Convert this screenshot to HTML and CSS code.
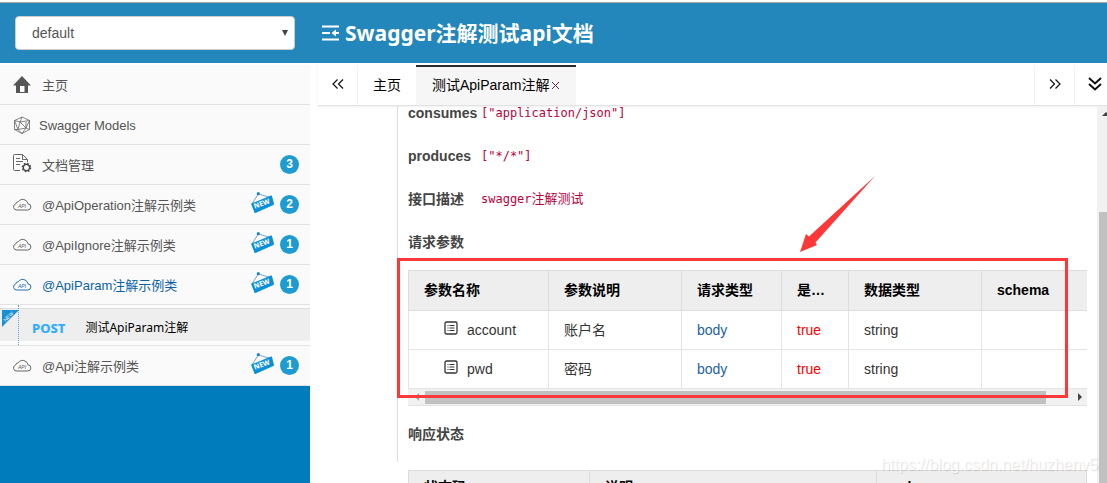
FILE: index.html
```html
<!DOCTYPE html>
<html lang="zh-CN">
<head>
<meta charset="utf-8">
<title>Swagger注解测试api文档</title>
<link rel="stylesheet" href="styles.css">
</head>
<body>
<svg class="sprites" aria-hidden="true">
  <symbol id="cloud" viewBox="0 0 20 20">
    <path d="M5 15H15.500a3 3 0 0 0 .5-6.200 4.900 4.900 0 0 0-3-3.800A4.700 4.700 0 0 0 6.500 6.700 3 3 0 0 0 3.600 9 3.100 3.100 0 0 0 5 15Z" fill="none" stroke="currentColor" stroke-width=".9"/>
    <text x="6" y="12.500" class="cloud-text">API</text>
  </symbol>
  <symbol id="sign" viewBox="0 0 25 25">
    <path d="M2.500 12 8.300 3 19 6" fill="none" stroke="#6f9fbf" stroke-width=".9"/>
    <circle cx="8.300" cy="2.700" r="1.600" fill="#1a86c9"/>
    <path d="M1.800 12.300 21 4.500q.8-.3 1 .5l2 7.800q.2.800-.6 1.200L5.500 22q-.8.300-1-.5L1.200 13.300Q1 12.600 1.800 12.300Z" fill="#0a8fdc"/>
    <text x="4.800" y="17.800" transform="rotate(-20 4.800 17.800)" class="sign-text">NEW</text>
  </symbol>
  <symbol id="list" viewBox="0 0 14 14">
    <rect x="1" y="1" width="12" height="12" rx="1.500" fill="none" stroke="currentColor" stroke-width="1.300"/>
    <path d="M3.500 4.500h1m1 0h5M3.500 7h1m1 0h5M3.500 9.500h1m1 0h5" stroke="currentColor"/>
  </symbol>
</svg>

<header class="topbar">
  <div class="picker">
    <select class="group-select" aria-label="分组"><option>default</option></select>
    <span class="caret" aria-hidden="true"></span>
  </div>
  <h1 class="title">
    <svg class="fold" viewBox="0 0 18 16" aria-hidden="true"><path d="M0 1.500h17M0 8h8M0 14.500h17" stroke="#fff" stroke-width="2"/><path d="M14 4.500v7L9.500 8Z" fill="#fff"/><path d="M12 8h5" stroke="#fff" stroke-width="2"/></svg>
    Swagger注解测试api文档
  </h1>
</header>

<div class="body">
  <nav class="sidebar">
    <a class="item" href="#"><svg class="icon" viewBox="0 0 20 20"><path d="M10 1 1 10.500h3V18h12v-7.500h3Z" fill="#555"/><path d="M8 11h4.500v6H8z" fill="#fafafa"/></svg><span class="name">主页</span></a>
    <a class="item" href="#"><svg class="icon" viewBox="0 0 20 20"><path d="M10 2 17.500 5.500v9L10 18.500l-7.500-4v-9ZM2.500 5.500 8 7l9.500-1.500M8 7l-2 7.500-3.500-9M6 14.500 10 18.500l4-5.500 3.500 1.500M6 14.500 14 13V7M8 7l6 6M10 2 8 7M14 13l3.500-7.500M2.500 14.500H6" fill="none" stroke="#666" stroke-width=".8"/></svg><span class="name model">Swagger Models</span></a>
    <a class="item" href="#"><svg class="icon doc" viewBox="0 0 20 20"><path d="M8 17.500H2.500Q1.500 17.500 1.500 16.500V2.500Q1.500 1.500 2.500 1.500H10.500L15.500 6.500V9M10.500 1.500v5h5M4 5.500h4M4 8.500h7M4 11.500h4" fill="none" stroke="#666"/><circle cx="14.500" cy="14.500" r="4" fill="none" stroke="#444" stroke-width="1.600" stroke-dasharray="1.700 1.440"/><circle cx="14.500" cy="14.500" r="3.100" fill="#fafafa" stroke="#444" stroke-width="1.200"/></svg><span class="name">文档管理</span><span class="badge">3</span></a>
    <a class="item" href="#"><svg class="icon"><use href="#cloud"/></svg><span class="name">@ApiOperation注解示例类</span><svg class="sign"><use href="#sign"/></svg><span class="badge">2</span></a>
    <a class="item" href="#"><svg class="icon"><use href="#cloud"/></svg><span class="name">@ApiIgnore注解示例类</span><svg class="sign"><use href="#sign"/></svg><span class="badge">1</span></a>
    <a class="item active" href="#"><svg class="icon"><use href="#cloud"/></svg><span class="name">@ApiParam注解示例类</span><svg class="sign"><use href="#sign"/></svg><span class="badge">1</span></a>
    <div class="submenu">
      <a class="method" href="#"><span class="verb">POST</span><span>测试ApiParam注解</span></a>
      <svg class="corner" viewBox="0 0 17 17" aria-hidden="true"><path d="M0 0H17L0 17Z" fill="#1a8fd6"/><text x="3.500" y="12" transform="rotate(-45 3.500 12)" class="corner-text">NEW</text></svg>
    </div>
    <a class="item" href="#"><svg class="icon"><use href="#cloud"/></svg><span class="name">@Api注解示例类</span><svg class="sign"><use href="#sign"/></svg><span class="badge">1</span></a>
  </nav>

  <main class="main">
    <div class="tabs">
      <button class="roll left" aria-label="向左"><svg class="chev" viewBox="0 0 12 12"><path d="M5.500 1.500 1 6l4.500 4.500M11 1.500 6.500 6l4.500 4.500"/></svg></button>
      <button class="tab">主页</button>
      <button class="tab current">测试ApiParam注解<svg class="close" viewBox="0 0 9 9"><path d="M1 1l7 7M8 1 1 8" fill="none" stroke="#5a2448"/></svg></button>
      <button class="roll right" aria-label="向右"><svg class="chev" viewBox="0 0 12 12"><path d="M1 1.500 5.500 6 1 10.500M6.500 1.500 11 6l-4.500 4.500"/></svg></button>
      <button class="roll more" aria-label="更多"><svg class="chev big" viewBox="0 0 14 14"><path d="M1 1l6 5.500L13 1M1 7l6 5.500L13 7"/></svg></button>
    </div>
    <div class="viewport">
      <div class="page">
        <div class="details">
          <div class="field"><b class="label">consumes</b><code>["application/json"]</code></div>
          <div class="field"><b class="label">produces</b><code>["*/*"]</code></div>
          <div class="field"><b class="label">接口描述</b><code>swagger<span class="zh">注解测试</span></code></div>
          <div class="field"><b class="label">请求参数</b></div>
          <div class="params">
            <div class="clip">
              <table class="grid params-grid">
                <colgroup><col class="c-name"><col class="c-desc"><col class="c-in"><col class="c-req"><col class="c-type"><col></colgroup>
                <thead><tr><th>参数名称</th><th>参数说明</th><th>请求类型</th><th>是…</th><th>数据类型</th><th>schema</th></tr></thead>
                <tbody>
                  <tr><td class="node"><svg class="list"><use href="#list"/></svg>account</td><td>账户名</td><td class="in">body</td><td class="req">true</td><td>string</td><td></td></tr>
                  <tr><td class="node"><svg class="list"><use href="#list"/></svg>pwd</td><td>密码</td><td class="in">body</td><td class="req">true</td><td>string</td><td></td></tr>
                </tbody>
              </table>
            </div>
            <div class="hbar"><span class="arrow-left"></span><span class="hthumb"></span><span class="arrow-right"></span></div>
            <div class="mark"></div>
            <svg class="pointer" viewBox="0 0 76 78" aria-hidden="true"><path d="M75 1 15.500 67.500 17 70 0 77 6 59 9 61.500Z" fill="#fc3838"/></svg>
          </div>
          <div class="field status"><b class="label">响应状态</b></div>
        </div>
        <table class="grid status-grid">
          <colgroup><col class="s-code"><col class="s-desc"><col></colgroup>
          <thead><tr><th>状态码</th><th>说明</th><th>schema</th></tr></thead>
        </table>
      </div>
      <div class="vbar"><span class="arrow-up"></span><span class="vthumb"></span></div>
      <div class="watermark">https://blog.csdn.net/huzhenv5</div>
    </div>
  </main>
</div>
</body>
</html>
```

FILE: styles.css
```css
* { box-sizing: border-box; }

body {
  margin: 0;
  height: 100vh;
  overflow: hidden;
  display: flex;
  flex-direction: column;
  background: #fff;
  color: #333;
  font: 14px/20px "Liberation Sans", "Noto Sans CJK SC", sans-serif;
}

.sprites { display: none; }
a { color: inherit; text-decoration: none; }

button {
  margin: 0;
  border: 0;
  background: none;
  font: inherit;
  color: #000;
}

.topbar {
  flex: none;
  display: flex;
  align-items: center;
  gap: 27px;
  height: 61px;
  margin-top: 2px;
  padding: 0 15px;
  border-top: 1px solid #aaa;
  background: #2387bb;
}

.picker { position: relative; width: 280px; flex: none; }

.group-select {
  display: block;
  width: 100%;
  height: 34px;
  padding: 0 16px;
  appearance: none;
  border: 1px solid #ccc;
  border-radius: 4px;
  background: #fff;
  color: #555;
  font: inherit;
}

.caret {
  position: absolute;
  right: 7px;
  top: 14px;
  border: 3px solid transparent;
  border-top: 6px solid #444;
  border-bottom: 0;
}

.title {
  margin: 0;
  display: flex;
  align-items: center;
  gap: 5px;
  color: #fff;
  font: bold 21px/30px "Noto Sans", "Noto Sans CJK SC", sans-serif;
  white-space: nowrap;
}

.fold { width: 18px; height: 16px; }

.body { flex: 1; min-height: 0; display: flex; }

.sidebar {
  flex: none;
  width: 310px;
  padding-top: 2px;
  background: linear-gradient(#fff 2px, #007bbc 2px);
  font-size: 13px;
  color: #555;
}

.item {
  display: flex;
  align-items: center;
  height: 40px;
  padding: 0 11px 0 12px;
  border-bottom: 1px solid #e2e2e2;
  background: #fafafa;
}

.item.active { color: #0962a8; }
.icon { width: 20px; height: 20px; flex: none; }
.icon.doc { margin-bottom: 3px; }
.name { flex: 1; margin-left: 10px; padding-top: 2px; }
.name.model { margin-left: 7px; }
.sign { width: 25px; height: 25px; margin: 0 5px 2px 0; }

.badge {
  width: 19px;
  height: 19px;
  border-radius: 50%;
  background: #1e9bd1;
  color: #fff;
  font-weight: bold;
  font-size: 12px;
  line-height: 18px;
  text-align: center;
}

.cloud-text { font: italic 5px "Liberation Sans", sans-serif; fill: currentColor; }
.sign-text { font: 800 7px "Noto Sans", sans-serif; fill: #fff; }
.corner-text { font: 5px "Liberation Sans", sans-serif; fill: #fff; }

.submenu {
  position: relative;
  height: 41px;
  padding: 3px 0 4px;
  border-bottom: 1px solid #e2e2e2;
  background: #fcfcfc;
}

.submenu::before {
  content: "";
  position: absolute;
  left: 18px;
  top: 0;
  bottom: 0;
  border-left: 1px dotted #5ba9cf;
}

.method {
  display: flex;
  align-items: center;
  gap: 20px;
  height: 33px;
  padding: 5px 0 0 32px;
  border-top: 1px solid #ddd;
  background: #eee;
  color: #000;
  font: 12px/20px "Noto Sans", "Noto Sans CJK SC", sans-serif;
}

.verb { color: #33adff; font-weight: 800; font-size: 13px; }
.corner { position: absolute; left: 2px; top: 5px; width: 17px; height: 17px; overflow: visible; }

.main { flex: 1; min-width: 0; margin-left: 8px; display: flex; flex-direction: column; }

.tabs {
  flex: none;
  display: flex;
  height: 43px;
  padding-top: 2px;
  border-bottom: 1px solid #e2e2e2;
  box-shadow: 0 1px 2px #0001;
}

.roll { width: 40px; padding: 0 0 3px; display: flex; align-items: center; justify-content: center; }
.roll.left { border-right: 1px solid #f2f2f2; }
.roll.right { margin-left: auto; border-left: 1px solid #f2f2f2; }
.roll.more { width: 33px; border-left: 1px solid #f2f2f2; justify-content: flex-end; padding-right: 5px; }
.chev { width: 12px; height: 12px; fill: none; stroke: #111; stroke-width: 1.2; }
.chev.big { width: 14px; height: 14px; stroke-width: 2; }

.tab { padding: 0 15px; white-space: nowrap; }
.tab.current {
  display: flex;
  align-items: center;
  gap: 2px;
  padding: 0 16px 2px;
  border-top: 2px solid #292b34;
  background: #f6f6f6;
}
.close { width: 9px; height: 9px; }

.viewport {
  position: relative;
  flex: 1;
  min-height: 0;
  display: flex;
  overflow: hidden;
}

/* The page is scrolled: its first row is partly under the tab bar. */
.page { flex: 1; min-width: 0; margin-top: -15px; padding: 0 10px 0 79px; }
.details { padding-left: 10px; border-left: 1px solid #ddd; }
.field { display: flex; align-items: center; height: 43px; }
.field.status { height: 56px; }
.label { width: 73px; color: #444; white-space: nowrap; }
code { font: 12px/20px "DejaVu Sans Mono", "Noto Sans CJK SC", monospace; color: #b9003c; }
.zh { font-size: 13px; }

.params { position: relative; margin-top: 7px; }
.clip { overflow: hidden; }

.grid { border-collapse: collapse; table-layout: fixed; width: 100%; }
.grid th, .grid td {
  height: 39px;
  padding: 0 15px;
  border: 1px solid #e4e4e4;
  text-align: left;
  white-space: nowrap;
}
.grid th { height: 40px; padding-bottom: 2px; background: #eee; color: #000; border-color: #ddd; }
.params-grid th:last-child, .params-grid td:last-child { border-right: 0; }

.c-name { width: 140px; }
.c-desc, .c-type { width: 133px; }
.c-in { width: 100px; }
.c-req { width: 67px; }
.s-code { width: 181px; }
.s-desc { width: 287px; }

.grid .node { padding-left: 35px; }
.list { width: 14px; height: 14px; margin-right: 9px; }
.in { color: #1a61a5; }
.req { color: #f00; }

.hbar {
  display: flex;
  align-items: center;
  height: 17px;
  padding: 0 5px 0 7px;
  border-bottom: 1px solid #e2e2e2;
  background: #f1f1f1;
}
.arrow-left, .arrow-right { border: 4px solid transparent; }
.arrow-left { border-left: 0; border-right: 4px solid #a3a3a3; }
.arrow-right { border-right: 0; border-left: 4px solid #444; }
.hthumb { flex: 1; height: 13px; margin: 0 32px 0 6px; background: #c1c1c1; }

.mark {
  position: absolute;
  left: -11px;
  right: 19px;
  top: -12px;
  height: 140px;
  border: 3px solid #fc3838;
}
.pointer { position: absolute; left: 392px; top: -95px; width: 76px; height: 78px; }

.status-grid { margin: 8px 0 0 11px; width: calc(100% - 11px); }
.status-grid th { height: 32px; padding-bottom: 0; }

.vbar {
  position: relative;
  flex: none;
  width: 10px;
  overflow: hidden;
  padding: 106px 0 0 2px;
  background: #f1f1f1;
}
.vthumb { display: block; height: 100%; background: #c1c1c1; }
.arrow-up {
  position: absolute;
  left: 5px;
  top: 6px;
  border: 4px solid transparent;
  border-top: 0;
  border-bottom: 4px solid #444;
}

.watermark {
  position: absolute;
  right: 9px;
  bottom: 8px;
  font-size: 16px;
  color: #fffc;
  text-shadow: 1px 1px 1px #0002;
}
```
